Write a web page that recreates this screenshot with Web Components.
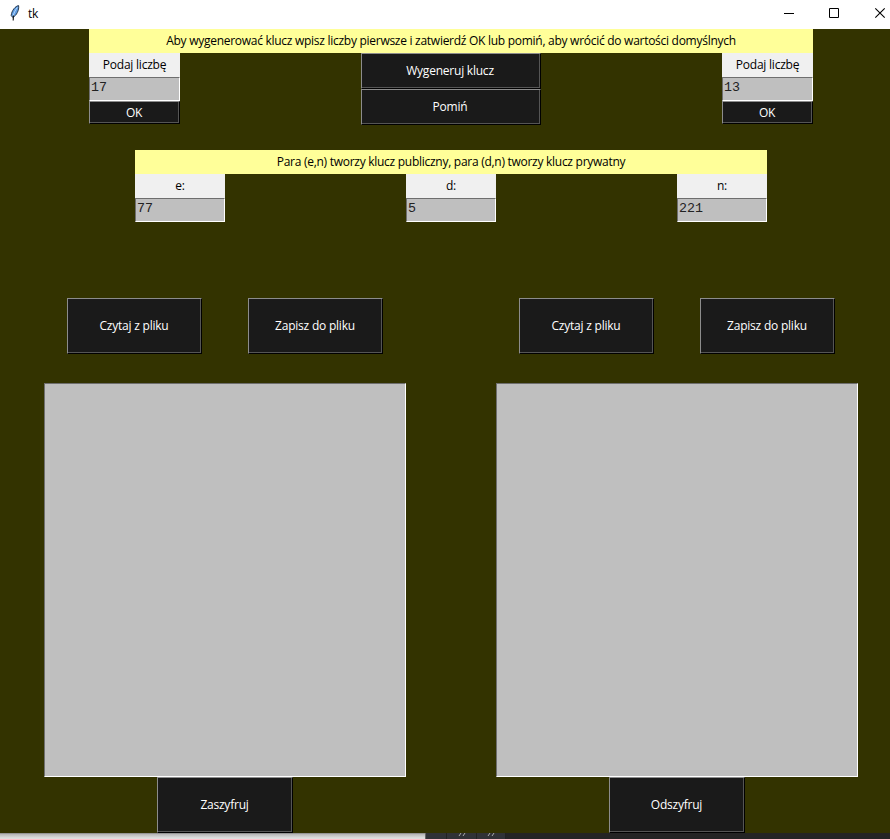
<!DOCTYPE html>
<html lang="pl">
<head>
<meta charset="utf-8">
<title>tk</title>
<style>
html,body{margin:0;height:100%;overflow:hidden;background:#242424}
</style>
</head>
<body>
<tk-window caption="tk"></tk-window>
<script>
const define = (name, html) => customElements.define(name, class extends HTMLElement {
  constructor() {
    super();
    const t = document.createElement('template');
    t.innerHTML = html;
    this.attachShadow({ mode: 'open' }).append(t.content.cloneNode(true));
  }
});

define('tk-label', `<style>
:host{display:flex;align-items:center;justify-content:center;height:24px;background:#f0f0f0;color:#000;white-space:nowrap;box-sizing:border-box}
:host([banner]){background:#ffff99;letter-spacing:-.275px}
</style><slot></slot>`);

define('tk-entry', `<style>
:host{display:block;box-sizing:border-box;height:24px;padding:1px 1px 0;background:#bfbfbf;border:1px solid;border-color:#6e6e6e #fff #fff #6e6e6e;color:#222;font:13.33px/17px "Liberation Mono",monospace;letter-spacing:0}
:host([area]){height:394px}
</style><slot></slot>`);

define('tk-button', `<style>
:host{display:flex;box-sizing:border-box;background:#1a1a1a;border:1px solid;border-color:#8c8c8c #000 #000 #8c8c8c;color:#fff;height:56px}
:host([small]){height:23px}
:host([small]) span{padding-top:2px}
:host([medium]){height:36px}
span{flex:1;display:flex;align-items:center;justify-content:center;border:solid #555;border-width:0 1px 1px 0;white-space:nowrap}
</style><span><slot></slot></span>`);

define('tk-prime', `<style>
:host{display:flex;flex-direction:column}
</style><tk-label>Podaj liczbę</tk-label><tk-entry><slot></slot></tk-entry><tk-button small>OK</tk-button>`);

define('tk-value', `<style>
:host{display:flex;flex-direction:column}
</style><tk-label><slot name="name"></slot></tk-label><tk-entry><slot></slot></tk-entry>`);

define('tk-pane', `<style>
:host{display:flex;flex-direction:column;width:362px}
.files{display:flex;justify-content:space-between;padding:0 23px 29px}
.files tk-button{width:135px}
.run{width:136px;margin-left:113px}
</style><div class="files"><tk-button>Czytaj z pliku</tk-button><tk-button>Zapisz do pliku</tk-button></div>
<tk-entry area></tk-entry><tk-button class="run"><slot></slot></tk-button>`);

define('tk-titlebar', `<style>
:host{display:flex;align-items:center;height:29px;box-sizing:border-box;background:#fff;color:#000;padding:0 4px 0 10px}
.name{flex:1;padding:0 0 1px 8px}
svg{display:block;flex:none}
.feather{margin-bottom:3px}
.controls{margin-bottom:3px}
</style>
<svg class="feather" width="10" height="16" viewBox="0 0 10 16"><path d="M8.600.600C5.500 1 1.600 5.500 1.200 10.500L2.800 12.500C6.600 10.500 9.300 5 8.600.600Z" fill="#5f9be0" stroke="#1c2c40" stroke-width=".9"/><path d="M7.300 2.500C5 5.500 3.800 8 3.200 11" fill="none" stroke="#b9dcff" stroke-width="1"/><path d="M3.400 10.500L3.200 15.500" fill="none" stroke="#111" stroke-width="1.100"/></svg>
<span class="name"><slot></slot></span>
<svg class="controls" width="102" height="12" viewBox="0 0 102 12" fill="none" stroke="#000"><path d="M0 6.500H10M45.500 1.500H54.500V10.500H45.500Z"/><path d="M91.300 1.300L100.700 10.700M100.700 1.300L91.300 10.700" stroke-width="1.100"/></svg>`);

define('desktop-strip', `<style>
:host{display:flex;height:6px;background:#242424;overflow:hidden}
.light{width:425px;background:linear-gradient(#777 0,#b4b4b4 1px,#dedede 5px);border-right:1px solid #666}
.tab{box-sizing:border-box;height:6px;background:#303236;border-right:1px solid #222;display:flex;justify-content:center}
</style><div class="light"></div><div class="tab" style="width:21px"></div>
<div class="tab" style="width:30px"><svg width="8" height="4"><path d="M1 3L3 0M5 3L7 0" stroke="#aaa"/></svg></div>
<div class="tab" style="width:29px"><svg width="8" height="4"><path d="M1 3L3 0M5 3L7 0" stroke="#aaa"/></svg></div>`);

define('tk-window', `<style>
:host{display:flex;flex-direction:column;width:890px;height:839px;overflow:hidden;font:12px/16px "Open Sans","Noto Sans",sans-serif;letter-spacing:-.22px}
main{height:804px;background:#333300;display:flow-root}
.primes{width:724px;margin-left:89px;height:121px}
.row{display:flex;justify-content:space-between}
.primes tk-prime{width:91px}
.actions{width:180px;display:flex;flex-direction:column;margin-right:1px}
.keys{width:632px;margin-left:135px;height:148px}
.keys tk-value{width:90px}
.panes{display:flex;gap:90px;margin-left:44px}
</style>
<tk-titlebar>tk</tk-titlebar>
<main>
<section class="primes"><tk-label banner>Aby wygenerować klucz wpisz liczby pierwsze i zatwierdź OK lub pomiń, aby wrócić do wartości domyślnych</tk-label>
<div class="row"><tk-prime>17</tk-prime><div class="actions"><tk-button medium>Wygeneruj klucz</tk-button><tk-button medium>Pomiń</tk-button></div><tk-prime>13</tk-prime></div></section>
<section class="keys"><tk-label banner>Para (e,n) tworzy klucz publiczny, para (d,n) tworzy klucz prywatny</tk-label>
<div class="row"><tk-value><span slot="name">e:</span>77</tk-value><tk-value><span slot="name">d:</span>5</tk-value><tk-value><span slot="name">n:</span>221</tk-value></div></section>
<section class="panes"><tk-pane>Zaszyfruj</tk-pane><tk-pane>Odszyfruj</tk-pane></section>
</main>
<desktop-strip></desktop-strip>`);
</script>
</body>
</html>
